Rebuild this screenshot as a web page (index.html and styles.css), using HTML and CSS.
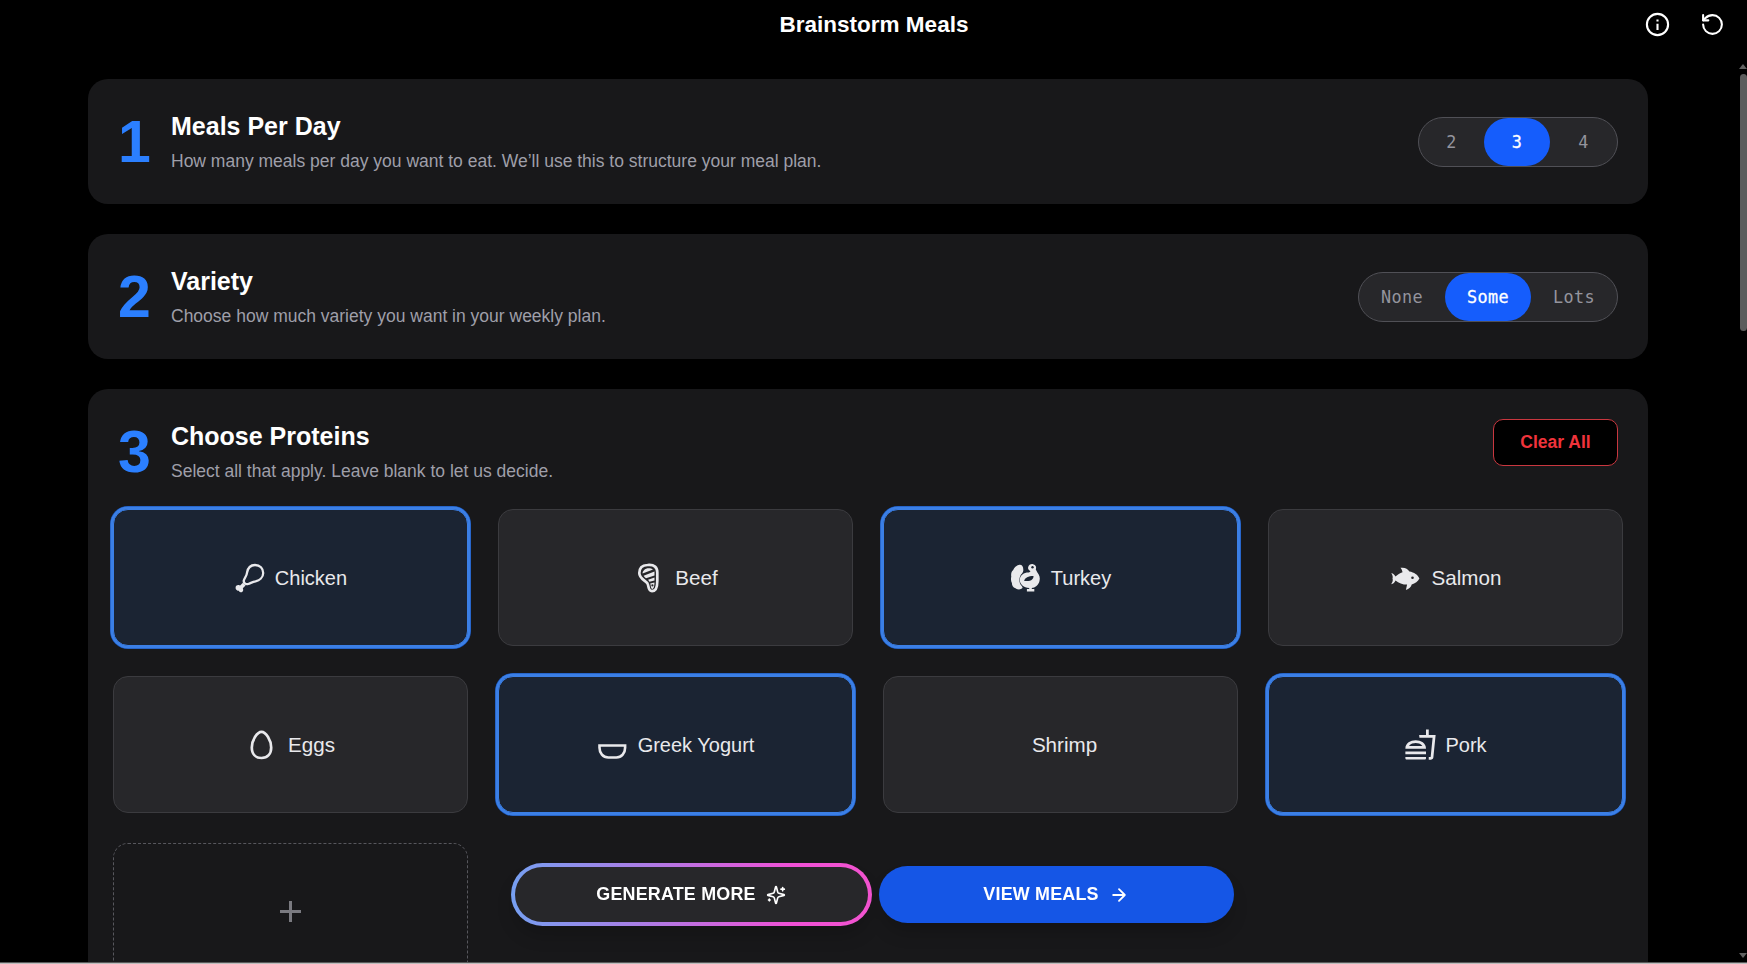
FILE: index.html
```html
<!DOCTYPE html>
<html lang="en">
<head>
<meta charset="utf-8">
<title>Brainstorm Meals</title>
<link rel="stylesheet" href="styles.css">
</head>
<body>
<div class="app">
  <header class="topbar">
    <h1 class="topbar-title">Brainstorm Meals</h1>
    <div class="topbar-actions">
      <svg class="info-icon" viewBox="0 0 25 25" fill="none" stroke="#fff" stroke-width="2.1"><circle cx="12.5" cy="12.5" r="10.6"/><path d="M12.5 11.7v6.2M12.5 7.6v2"/></svg>
      <svg class="reset-icon" viewBox="0 0 24 24" fill="none" stroke="#fff" stroke-width="2" stroke-linecap="round" stroke-linejoin="round"><path d="M3 12a9 9 0 1 0 9-9 9.75 9.75 0 0 0-6.74 2.74L3 8"/><path d="M3 3v5h5"/></svg>
    </div>
  </header>
  <div class="body">
    <main class="content">
      <section class="card">
        <div class="card-head">
          <span class="step">1</span>
          <div class="headings"><h2 class="title">Meals Per Day</h2><p class="subtitle">How many meals per day you want to eat. We’ll use this to structure your meal plan.</p></div>
          <div class="segments segments-count"><span class="segment">2</span><span class="segment active">3</span><span class="segment">4</span></div>
        </div>
      </section>
      <section class="card">
        <div class="card-head">
          <span class="step">2</span>
          <div class="headings"><h2 class="title">Variety</h2><p class="subtitle">Choose how much variety you want in your weekly plan.</p></div>
          <div class="segments segments-variety"><span class="segment">None</span><span class="segment active">Some</span><span class="segment">Lots</span></div>
        </div>
      </section>
      <section class="card card-grow">
        <div class="card-head">
          <span class="step">3</span>
          <div class="headings"><h2 class="title">Choose Proteins</h2><p class="subtitle">Select all that apply. Leave blank to let us decide.</p></div>
          <button class="clear">Clear All</button>
        </div>
        <div class="grid">
          <div class="option selected">
            <svg class="icon" viewBox="0 0 30 30" fill="none" stroke="currentColor" stroke-width="2.3" stroke-linejoin="round"><path d="M8.800 17.500C9.200 15 11.600 13.500 12 9.800C12.800 5 15.600 2 20 2C25 2 28.200 5.500 28.200 10C28.200 14.500 24.500 17.400 20.500 18.300C17.500 18.900 15.500 20.300 13.200 21C10.400 21.700 8.400 19.700 8.800 17.500Z"/><path d="M9.200 21.200L5.500 24.900" stroke-width="3.800"/><path d="M.6 25.200c-.4-2.500 2.200-3.800 4.200-2.800l3 2.800c1.100 2-.1 4.400-2.200 4.100-1-.1-1.500-.8-1.700-1.500-1.700 0-3.200-1.100-3.300-2.600z" fill="currentColor" stroke="none"/></svg>
            <span>Chicken</span>
          </div>
          <div class="option">
            <svg class="icon steak-icon" viewBox="0 0 30 30"><path d="M11.500 2C18.500 1.300 21.300 4.500 21.300 9.500V18C21.300 24.500 19.500 28.200 16 28.200C12 28.200 13 23.800 11.600 20.800C10.300 17.600 3.300 16.200 3.300 10C3.300 5.200 6.500 2.300 11.500 2Z" fill="none" stroke="currentColor" stroke-width="2.700"/><path d="M8 7.200C10 4.800 14.500 4.700 17 6.500L6.600 10.600C6.400 9.200 7 8 8 7.200ZM7.600 12.700L18.500 8.400V12.400L10 15.300C9.200 14.700 8.200 13.800 7.600 12.700ZM12.100 16.700L18.500 14.500V17.600L13.500 18.800ZM14.200 20.600L18.500 19.600C18.400 22.500 17.900 26 16.300 26C14.800 26 15 22.800 14.200 20.600Z" fill="currentColor"/><circle cx="16.400" cy="22.400" r="1.100" fill="#27272a"/></svg>
            <span>Beef</span>
          </div>
          <div class="option selected">
            <svg class="icon" viewBox="0 0 30 30"><path d="M8.500 1.800C10.800 1.500 12.500 3.500 12.300 7.200C12.500 8.200 11.900 9.300 11 10.400C8.400 12.800 7.800 17 9 20.500C9.800 22.500 12 23.900 11.500 25C10 26.800 6.600 26.900 4.500 25.300C2 24.500 .9 22.300 .9 20C-.2 18 -.2 15.500 .3 13.800C-.2 11 .4 8.400 2.200 7C3.200 4 6 2.100 8.500 1.800Z" fill="currentColor"/><path d="M17.200 4C17.700 1.800 20 .7 22.100 1.200C24.900 2 25.700 4.200 24.800 6.400L26.400 9.500C28.400 12 29.400 15 28.500 18C27.600 22 24 24.700 20.800 25.100V26.100H23.300V28.400H15.900V26.100H18.200V25.100C12.800 24.700 8.800 21.300 8.800 17C8.800 12 13.400 9.300 17.800 9.500C19.500 9.200 20 7.900 18.500 7.500C17.300 6.800 16.800 5.300 17.200 4Z" fill="currentColor"/><path d="M13.200 18C13.700 14.500 17.500 13.100 22.500 13C22.500 16.200 20.500 18.700 13.200 18Z" fill="#1b2433"/><circle cx="21.500" cy="4.300" r="1.200" fill="#1b2433"/></svg>
            <span>Turkey</span>
          </div>
          <div class="option">
            <svg class="icon" viewBox="0 0 30 30"><path d="M.2 10.200C2.500 10.300 3.800 12 4.500 13.600C6.500 11.700 9 10.300 11.500 9.300C11.300 7.400 10.500 6 9.500 4.800C13.500 4.200 16.700 5.300 18.400 8.600C23 9.300 27 12 28.400 15.500C27.100 18.500 24 20.600 20.700 21.500C20.200 23.800 18 25.900 14.900 27.100L16.100 21.600C11.500 21.600 7.800 20 4.500 17.400C3.800 19.300 2.300 20.800 .2 21.200C1.600 19 2.200 17.500 1.500 15.600C2.100 13.800 1.600 12 .2 10.200Z" fill="currentColor"/><circle cx="21.500" cy="14.800" r="1.300" fill="#27272a"/></svg>
            <span>Salmon</span>
          </div>
          <div class="option">
            <svg class="icon" viewBox="0 0 30 30" fill="none" stroke="currentColor" stroke-width="2.700"><path d="M14.500 1.900C10 1.900 4.800 10.500 4.800 17.500C4.800 24 8.500 28 14.500 28S24.200 24 24.200 17.500C24.200 10.500 19 1.900 14.500 1.900Z"/></svg>
            <span>Eggs</span>
          </div>
          <div class="option selected">
            <svg class="icon" viewBox="0 0 30 30" fill="none" stroke="currentColor" stroke-width="2.600"><path d="M1.500 15.500H27.100V17.700C27.100 23.200 23.600 27.500 18.300 27.500H10.300C5 27.500 1.500 23.200 1.500 17.700Z"/></svg>
            <span>Greek Yogurt</span>
          </div>
          <div class="option no-icon"><span>Shrimp</span></div>
          <div class="option selected">
            <svg class="icon icon-large" viewBox="0 0 24 24" fill="currentColor"><path d="M1 21.980c0 .56.45 1.010 1.010 1.010H15c.56 0 1.010-.45 1.010-1.010V21H1v.98zM8.500 8.990C4.750 8.990 1 11 1 15h15c0-4-3.750-6.010-7.500-6.010zM3.620 13c1.110-1.550 3.470-2.010 4.880-2.010s3.770.46 4.880 2.010H3.620zM1 17h15v2H1zM18 5V1h-2v4h-5l.23 2h9.560l-1.400 14H18v2h1.720c.84 0 1.530-.65 1.630-1.470L23 5h-5z"/></svg>
            <span>Pork</span>
          </div>
          <div class="option add">
            <svg class="plus" viewBox="0 0 22 22" stroke="currentColor" stroke-width="3"><path d="M10.500 0V21M0 10.500H21"/></svg>
          </div>
        </div>
      </section>
    </main>
    <div class="scrollbar">
      <svg class="arrow" viewBox="0 0 8 5" fill="#616161"><path d="M0 5L4 0L8 5Z"/></svg>
      <div class="thumb"></div>
      <svg class="arrow arrow-down" viewBox="0 0 8 5" fill="#616161"><path d="M0 0L4 5L8 0Z"/></svg>
    </div>
  </div>
  <div class="edge"></div>
  <div class="actions">
    <button class="action generate"><span>GENERATE MORE</span>
      <svg class="action-icon" viewBox="0 0 24 24" fill="none" stroke="currentColor" stroke-width="2" stroke-linecap="round" stroke-linejoin="round"><path d="M9.937 15.500A2 2 0 0 0 8.500 14.063l-6.135-1.582a.5.5 0 0 1 0-.962L8.500 9.936A2 2 0 0 0 9.937 8.500l1.582-6.135a.5.5 0 0 1 .963 0L14.063 8.500A2 2 0 0 0 15.500 9.937l6.135 1.581a.5.5 0 0 1 0 .964L15.500 14.063a2 2 0 0 0-1.437 1.437l-1.582 6.135a.5.5 0 0 1-.963 0z"/><path d="M20 3v4M22 5h-4M4 17v2M5 18H3"/></svg>
    </button>
    <button class="action view"><span>VIEW MEALS</span>
      <svg class="action-icon" viewBox="0 0 24 24" fill="none" stroke="currentColor" stroke-width="2.2" stroke-linecap="round" stroke-linejoin="round"><path d="M5 12h14M12 5l7 7-7 7"/></svg>
    </button>
  </div>
</div>
</body>
</html>
```
FILE: styles.css
```css
* { box-sizing: border-box; margin: 0; }
body { background: #000; color: #fff; font-family: "Liberation Sans", Arial, sans-serif; overflow: hidden; }
button { font-family: inherit; padding: 0; }
svg { display: block; flex: none; }

.app { height: 964px; display: flex; flex-direction: column; }

.topbar { height: 59px; flex: none; display: grid; grid-template-columns: 1fr auto 1fr; padding: 0 22px 0 23px; }
.topbar-title { grid-column: 2; font-size: 22.500px; line-height: 49px; font-weight: 700; }
.topbar-actions { display: flex; justify-content: flex-end; gap: 30px; padding-top: 12px; }
.info-icon, .reset-icon { width: 25px; height: 25px; }

.body { flex: 1; min-height: 0; display: flex; }
.content { flex: 1; min-height: 0; padding: 20px 88px 0; display: flex; flex-direction: column; gap: 30px; overflow: hidden; }
.card { flex: none; background: #18181a; border-radius: 20px; padding: 30px 25px; }
.card-grow { height: 760px; }
.card-head { display: flex; align-items: center; padding: 0 5px; height: 65px; }
.step { width: 33px; margin-right: 20px; color: #2b7fff; font-size: 59px; line-height: 60px; font-weight: 700; }
.headings { flex: 1; }
.title { font-size: 25px; line-height: 35px; font-weight: 700; }
.subtitle { margin-top: 5px; font-size: 17.500px; line-height: 25px; color: #9f9fa9; }

.segments { display: grid; height: 50px; border: 1px solid #505056; border-radius: 25px; background: #27272a; font: 16.800px "DejaVu Sans Mono", monospace; letter-spacing: .35px; color: #94949d; }
.segments-count { grid-template-columns: 65px 66px 67px; }
.segments-variety { grid-template-columns: repeat(3, 86px); }
.segment { display: flex; align-items: center; justify-content: center; border-radius: 24px; }
.segment.active { background: #155dfc; color: #fff; -webkit-text-stroke: .3px #fff; }

.clear { align-self: flex-start; width: 125px; height: 47px; border: 1px solid #c9373f; border-radius: 10px; background: #000; color: #f0333b; font-size: 17.500px; font-weight: 700; }

.grid { display: grid; grid-template-columns: repeat(4, 355px); grid-auto-rows: 137px; gap: 30px; margin-top: 25px; }
.option { display: flex; align-items: center; justify-content: center; gap: 11px; padding-left: 1px; border: 1px solid #3b3b3f; border-radius: 15px; background: #27272a; color: #e9e9ec; font-size: 20.600px; }
.option.selected { gap: 10px; border-color: #3b7fe6; background: #1b2433; box-shadow: 0 0 0 2.500px #3b7fe6, 0 0 0 3px #174fae; font-size: 20px; }
.option.selected span { padding-top: 1px; }
.option.no-icon { padding-left: 8px; }
.option.add { padding: 0; border: 1px dashed #57575d; background: none; color: #7a7a80; }
.icon { width: 30px; height: 30px; }
.icon-large { width: 33px; height: 33px; margin: 0 -2px 0 -1px; }
.steak-icon { margin: 0 -2px 0 2px; }
.plus { width: 22px; height: 22px; }

.scrollbar { width: 8px; display: flex; flex-direction: column; align-items: center; padding: 5px 0 4px; margin-left: 3px; }
.arrow { width: 8px; height: 5px; }
.thumb { width: 7px; height: 257px; margin: 5px 0 0 1px; border-radius: 3.500px; background: #5c5c5c; }
.arrow-down { margin-top: auto; }
.edge { height: 2px; flex: none; background: linear-gradient(#5a5a5a 50%, #bdbdbd 50%); }

/* Floating buttons over the scrolling content */
.actions { position: fixed; left: 0; right: 0; bottom: 41px; display: flex; justify-content: center; gap: 10px; }
.action { width: 355px; height: 57px; display: flex; align-items: center; justify-content: center; gap: 10px; border: 0; border-radius: 29px; color: #fff; font-size: 17.900px; font-weight: 700; letter-spacing: .2px; box-shadow: 0 12px 18px -3px rgba(0, 0, 0, .18); }
.generate { width: 361px; height: 63px; margin: -3px; border: 4px solid transparent; border-radius: 32px; background: linear-gradient(#27272a, #27272a) padding-box, linear-gradient(90deg, #76a0f2, #a97ee6 35%, #f050d6 78%, #f253cf) border-box; }
.view { background: #1556e6; }
.action-icon { width: 20px; height: 20px; }
```
